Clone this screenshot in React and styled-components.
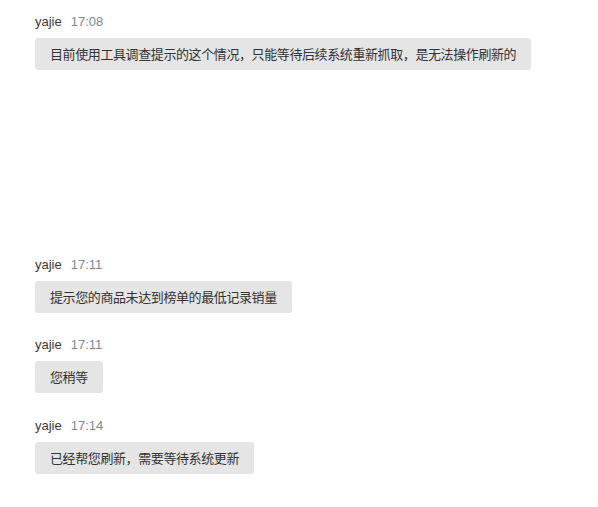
import React from 'react';
import styled, { createGlobalStyle } from 'styled-components';

const GlobalStyle = createGlobalStyle`
  body {
    margin: 0;
    background: #ffffff;
    font-family: "Liberation Sans", Arial, "Noto Sans CJK SC", sans-serif;
  }
`;

const Page = styled.div`
  width: 598px;
  height: 507px;
  padding: 14px 35px 0;
  box-sizing: border-box;
  background: #ffffff;
`;

const Message = styled.div`
  display: flex;
  flex-direction: column;
  align-items: flex-start;
  margin-bottom: ${({ $gap }) => $gap}px;
`;

const Meta = styled.div`
  display: flex;
  gap: 9px;
  font-size: 13px;
  line-height: 16px;
`;

const Name = styled.span`
  color: #3a3a3a;
`;

const Time = styled.span`
  color: #7f8892;
`;

const Bubble = styled.div`
  margin-top: 8px;
  padding: 0 15px;
  height: 32px;
  line-height: 32px;
  background: #e5e5e5;
  border-radius: 3px;
  color: #333333;
  font-size: 13px;
  letter-spacing: -0.4px;
  font-family: "Noto Sans CJK SC", "Liberation Sans", sans-serif;
  white-space: nowrap;
`;

const messages = [
  { name: 'yajie', time: '17:08', text: '目前使用工具调查提示的这个情况，只能等待后续系统重新抓取，是无法操作刷新的', gap: 187 },
  { name: 'yajie', time: '17:11', text: '提示您的商品未达到榜单的最低记录销量', gap: 24 },
  { name: 'yajie', time: '17:11', text: '您稍等', gap: 25 },
  { name: 'yajie', time: '17:14', text: '已经帮您刷新，需要等待系统更新', gap: 0 },
];

const App = () => {
  return (
    <>
      <GlobalStyle />
      <Page>
        {messages.map((m, i) => (
          <Message key={i} $gap={m.gap}>
            <Meta>
              <Name>{m.name}</Name>
              <Time>{m.time}</Time>
            </Meta>
            <Bubble>{m.text}</Bubble>
          </Message>
        ))}
      </Page>
    </>
  );
};

export default App;
